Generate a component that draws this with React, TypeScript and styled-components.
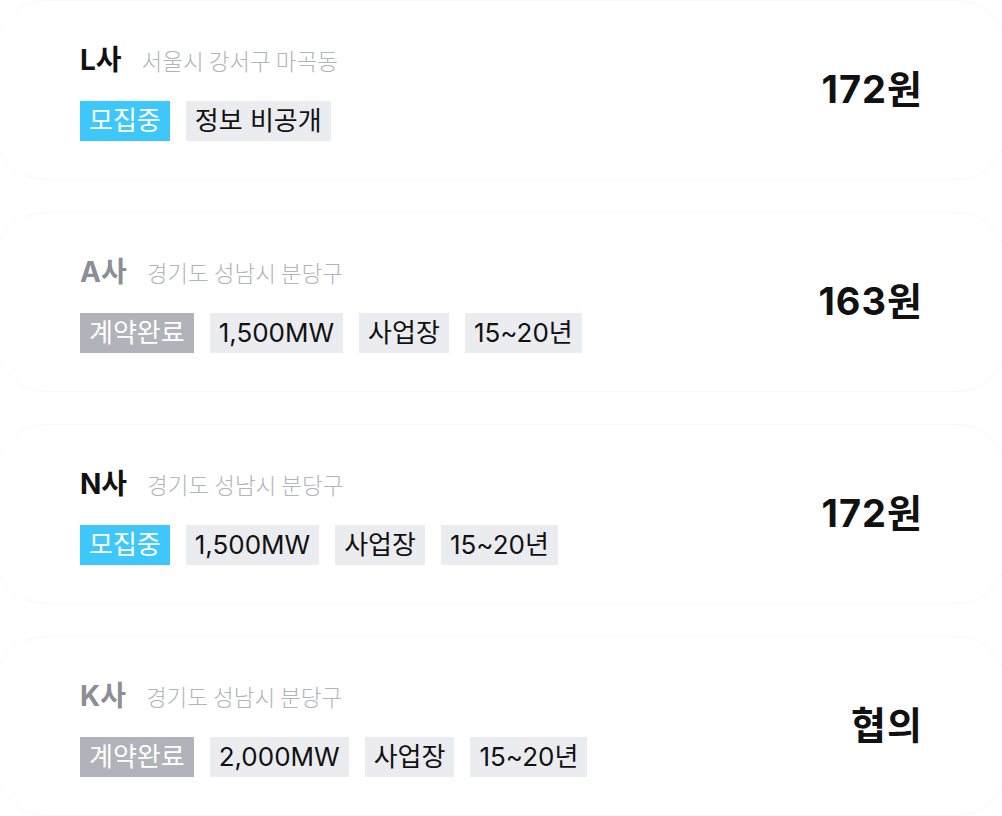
import styled, { createGlobalStyle } from "styled-components";

type Status = "open" | "done";

interface Offer {
  company: string;
  address: string;
  status: Status;
  tags: string[];
  price: string;
}

const offers: Offer[] = [
  {
    company: "L사",
    address: "서울시 강서구 마곡동",
    status: "open",
    tags: ["정보 비공개"],
    price: "172원",
  },
  {
    company: "A사",
    address: "경기도 성남시 분당구",
    status: "done",
    tags: ["1,500MW", "사업장", "15~20년"],
    price: "163원",
  },
  {
    company: "N사",
    address: "경기도 성남시 분당구",
    status: "open",
    tags: ["1,500MW", "사업장", "15~20년"],
    price: "172원",
  },
  {
    company: "K사",
    address: "경기도 성남시 분당구",
    status: "done",
    tags: ["2,000MW", "사업장", "15~20년"],
    price: "협의",
  },
];

const App = () => {
  return (
    <>
      <GlobalStyle />
      <OfferList>
        {offers.map((offer, index) => (
          <OfferCard key={index}>
            <OfferInfo>
              <TitleRow>
                <CompanyName $muted={offer.status === "done"}>
                  {offer.company}
                </CompanyName>
                <Address>{offer.address}</Address>
              </TitleRow>
              <TagRow>
                <StatusTag $status={offer.status}>
                  {offer.status === "open" ? "모집중" : "계약완료"}
                </StatusTag>
                {offer.tags.map((tag) => (
                  <Tag key={tag}>{tag}</Tag>
                ))}
              </TagRow>
            </OfferInfo>
            <Price>{offer.price}</Price>
          </OfferCard>
        ))}
      </OfferList>
    </>
  );
};

const GlobalStyle = createGlobalStyle`
  body {
    margin: 0;
    background: #ffffff;
    font-family: Inter, "Noto Sans CJK KR", sans-serif;
    color: #111111;
    overflow: hidden;
  }
`;

const OfferList = styled.div`
  display: flex;
  flex-direction: column;
  gap: 32px;
  margin: 0 -5px;
`;

const OfferCard = styled.div`
  height: 180px;
  box-sizing: border-box;
  border: 1px solid #f8f8fa;
  border-radius: 50px;
  padding: 0 83px 0 84px;
  display: flex;
  align-items: center;
  justify-content: space-between;
`;

const OfferInfo = styled.div`
  display: flex;
  flex-direction: column;
  gap: 29px;
  padding-bottom: 2px;
`;

const TitleRow = styled.div`
  display: flex;
  align-items: baseline;
  gap: 20px;
  height: 34px;
`;

const CompanyName = styled.span<{ $muted: boolean }>`
  font-size: 28px;
  font-weight: 700;
  color: ${(p) => (p.$muted ? "#8b8e94" : "#111111")};
`;

const Address = styled.span`
  font-size: 22.5px;
  color: #b1b4ba;
  font-family: "Noto Sans CJK KR", sans-serif;
  font-weight: 300;
`;

const TagRow = styled.div`
  display: flex;
  gap: 16px;
`;

const Tag = styled.span`
  height: 40px;
  line-height: 40px;
  padding: 0 9px;
  font-size: 26px;
  background: #ebecf0;
  color: #111111;
`;

const StatusTag = styled(Tag)<{ $status: Status }>`
  background: ${(p) => (p.$status === "open" ? "#3ec7fb" : "#b0b3b9")};
  color: #ffffff;
`;

const Price = styled.div`
  font-size: 38px;
  font-weight: 700;
  letter-spacing: 1px;
  color: #111111;
  margin-bottom: 8px;
`;

export default App;
